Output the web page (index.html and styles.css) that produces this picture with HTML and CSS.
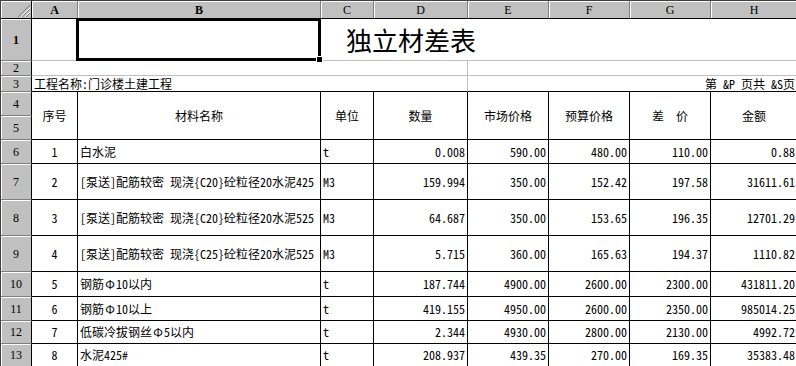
FILE: index.html
```html
<!DOCTYPE html>
<html lang="zh-CN">
<head>
<meta charset="utf-8">
<title>独立材差表</title>
<link rel="stylesheet" href="styles.css">
</head>
<body>
<div class="sheet">
  <div class="hdr corner">
    <svg class="corner-mark" width="14" height="12" viewBox="0 0 14 12">
      <line x1="2" y1="12" x2="14" y2="0" stroke="#808080"/>
      <line x1="5" y1="12" x2="14" y2="3" stroke="#fff"/>
      <line x1="6" y1="12" x2="14" y2="4" stroke="#808080"/>
      <line x1="9" y1="12" x2="14" y2="7" stroke="#fff"/>
      <line x1="10" y1="12" x2="14" y2="8" stroke="#808080"/>
    </svg>
  </div>
  <div class="hdr col bold">A</div>
  <div class="hdr col bold">B</div>
  <div class="hdr col">C</div>
  <div class="hdr col">D</div>
  <div class="hdr col">E</div>
  <div class="hdr col">F</div>
  <div class="hdr col">G</div>
  <div class="hdr col">H</div>

  <div class="hdr row bold">1</div>
  <div class="cell"></div>
  <div class="cell"></div>
  <div class="cell title span6">独立材差表</div>

  <div class="hdr row">2</div>
  <div class="cell span4"></div>
  <div class="cell span4"></div>

  <div class="hdr row">3</div>
  <div class="cell span4 info">工程名称:门诊楼土建工程</div>
  <div class="cell span4 info r">第 &amp;P 页共 &amp;S页</div>

  <div class="hdr row">4</div>
  <div class="cell t c tall">序号</div>
  <div class="cell t c tall">材料名称</div>
  <div class="cell t c tall">单位</div>
  <div class="cell t c tall">数量</div>
  <div class="cell t c tall">市场价格</div>
  <div class="cell t c tall">预算价格</div>
  <div class="cell t c tall">差　价</div>
  <div class="cell t c tall">金额</div>
  <div class="hdr row">5</div>

  <div class="hdr row">6</div>
  <div class="cell t c">1</div>
  <div class="cell t">白水泥</div>
  <div class="cell t">t</div>
  <div class="cell t r">0.008</div>
  <div class="cell t r">590.00</div>
  <div class="cell t r">480.00</div>
  <div class="cell t r">110.00</div>
  <div class="cell t r">0.88</div>

  <div class="hdr row">7</div>
  <div class="cell t c">2</div>
  <div class="cell t">[泵送]配筋较密 现浇{C20}砼粒径20水泥425</div>
  <div class="cell t">M3</div>
  <div class="cell t r">159.994</div>
  <div class="cell t r">350.00</div>
  <div class="cell t r">152.42</div>
  <div class="cell t r">197.58</div>
  <div class="cell t r">31611.61</div>

  <div class="hdr row">8</div>
  <div class="cell t c">3</div>
  <div class="cell t">[泵送]配筋较密 现浇{C20}砼粒径20水泥525</div>
  <div class="cell t">M3</div>
  <div class="cell t r">64.687</div>
  <div class="cell t r">350.00</div>
  <div class="cell t r">153.65</div>
  <div class="cell t r">196.35</div>
  <div class="cell t r">12701.29</div>

  <div class="hdr row">9</div>
  <div class="cell t c">4</div>
  <div class="cell t">[泵送]配筋较密 现浇{C25}砼粒径20水泥525</div>
  <div class="cell t">M3</div>
  <div class="cell t r">5.715</div>
  <div class="cell t r">360.00</div>
  <div class="cell t r">165.63</div>
  <div class="cell t r">194.37</div>
  <div class="cell t r">1110.82</div>

  <div class="hdr row">10</div>
  <div class="cell t c">5</div>
  <div class="cell t">钢筋<span class="phi">Φ</span>10以内</div>
  <div class="cell t">t</div>
  <div class="cell t r">187.744</div>
  <div class="cell t r">4900.00</div>
  <div class="cell t r">2600.00</div>
  <div class="cell t r">2300.00</div>
  <div class="cell t r">431811.20</div>

  <div class="hdr row">11</div>
  <div class="cell t c">6</div>
  <div class="cell t">钢筋<span class="phi">Φ</span>10以上</div>
  <div class="cell t">t</div>
  <div class="cell t r">419.155</div>
  <div class="cell t r">4950.00</div>
  <div class="cell t r">2600.00</div>
  <div class="cell t r">2350.00</div>
  <div class="cell t r">985014.25</div>

  <div class="hdr row">12</div>
  <div class="cell t c">7</div>
  <div class="cell t">低碳冷拔钢丝<span class="phi">Φ</span>5以内</div>
  <div class="cell t">t</div>
  <div class="cell t r">2.344</div>
  <div class="cell t r">4930.00</div>
  <div class="cell t r">2800.00</div>
  <div class="cell t r">2130.00</div>
  <div class="cell t r">4992.72</div>

  <div class="hdr row">13</div>
  <div class="cell t c">8</div>
  <div class="cell t">水泥425#</div>
  <div class="cell t">t</div>
  <div class="cell t r">208.937</div>
  <div class="cell t r">439.35</div>
  <div class="cell t r">270.00</div>
  <div class="cell t r">169.35</div>
  <div class="cell t r">35383.48</div>

  <div class="selection"></div>
  <div class="handle"></div>
</div>
</body>
</html>
```

FILE: styles.css
```css
html, body {
  margin: 0;
  padding: 0;
  background: #fff;
  overflow: hidden;
}

.sheet {
  position: relative;
  display: grid;
  grid-template-columns: 31px 46px 243px 53px 94px 81px 81px 81px 87px;
  grid-template-rows: 18px 42px 15px 16px 24px 24px 24px 36px 36px 36px 25px 24px 23px 23px;
  width: max-content;
  border-top: 1px solid #404040;
  border-left: 1px solid #404040;
  font-family: "Noto Sans Mono CJK SC", "Noto Sans CJK SC", monospace;
  font-size: 12px;
  color: #000;
}

.hdr {
  box-sizing: border-box;
  background: #c0c0c0;
  border-right: 1px solid #808080;
  border-bottom: 1px solid #808080;
  box-shadow: inset 1px 1px 0 #fff;
  display: flex;
  align-items: center;
  justify-content: center;
  font-family: "Liberation Serif", serif;
  font-size: 12px;
  line-height: 1;
}

.hdr.col {
  border-bottom-color: #000;
}

.hdr.row {
  border-right-color: #000;
}

.corner {
  border-bottom-color: #000;
  border-right-color: #000;
  justify-content: flex-end;
  align-items: flex-end;
}

.corner-mark {
  display: block;
  margin: 0 1px 1px 0;
}

.bold {
  font-weight: bold;
}

.cell {
  box-sizing: border-box;
  display: flex;
  align-items: center;
  padding: 0 2px;
  border-right: 1px solid #c0c0c0;
  border-bottom: 1px solid #c0c0c0;
  white-space: nowrap;
  line-height: 1;
}

.cell.t {
  border-color: #000;
}

.info {
  border-bottom-color: #000;
}

.span4 {
  grid-column: span 4;
}

.span6 {
  grid-column: span 6;
}

.tall {
  grid-row: span 2;
}

.c {
  justify-content: center;
}

.r {
  justify-content: flex-end;
}

.phi {
  display: inline-block;
  width: 12px;
  text-align: center;
}

.title {
  font-family: "Noto Sans CJK SC", sans-serif;
  font-size: 26px;
  padding-left: 25px;
}

.selection {
  position: absolute;
  left: 75px;
  top: 17px;
  width: 245px;
  height: 43px;
  box-sizing: border-box;
  border: 3px solid #000;
  pointer-events: none;
}

.handle {
  position: absolute;
  left: 316px;
  top: 56px;
  width: 5px;
  height: 5px;
  background: #000;
  outline: 1px solid #fff;
}
```
